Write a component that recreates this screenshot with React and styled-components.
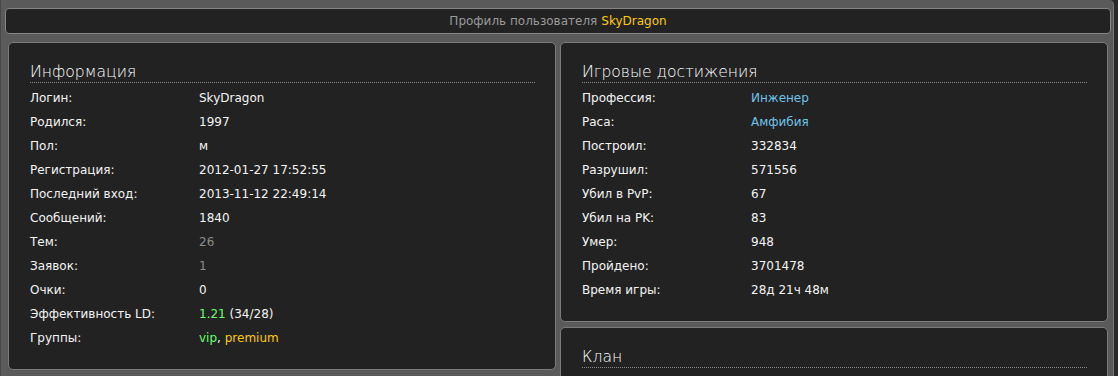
import React from "react";
import styled, { createGlobalStyle } from "styled-components";

const GlobalStyle = createGlobalStyle`
  html, body {
    margin: 0;
    padding: 0;
    background: #2a2a2a;
  }
  body {
    font-family: "DejaVu Sans", Verdana, sans-serif;
    font-size: 12px;
    color: #f4f4f4;
  }
`;

const Frame = styled.div`
  width: 1114px;
  height: 376px;
  box-sizing: border-box;
  background: #5a5a5a;
  border-left: 1px solid #474747;
  border-right: 1px solid #777;
  border-top-right-radius: 5px;
  padding: 8px 2px 0 4px;
  overflow: hidden;
`;

const TitleBar = styled.div`
  height: 26px;
  box-sizing: border-box;
  background: #222;
  border: 1px solid #858585;
  border-radius: 4px;
  display: flex;
  align-items: center;
  justify-content: center;
  color: #9a9a9a;
`;

const UserName = styled.span`
  color: #ffcc00;
  margin-left: 4px;
`;

const Columns = styled.div`
  display: grid;
  grid-template-columns: 548px 548px;
  gap: 4px;
  margin: 8px 4px 0 3px;
  align-items: start;
`;

const Stack = styled.div`
  display: flex;
  flex-direction: column;
  gap: 5px;
`;

const Panel = styled.section`
  background: #222;
  border: 1px solid #7c7c7c;
  border-radius: 5px;
  padding: 20px 20px 19px 21px;
`;

const Heading = styled.h2`
  margin: 0 0 3px;
  font-family: "DejaVu Sans", Verdana, sans-serif;
  font-weight: 200;
  font-size: 15.6px;
  line-height: 19px;
  color: #ffffff;
  border-bottom: 1px dotted #8a8a8a;
`;

const Row = styled.div`
  display: grid;
  grid-template-columns: 169px 1fr;
  height: 24px;
  align-items: center;
`;

const Value = styled.span`
  color: ${(p) => p.$color || "#f4f4f4"};
`;

const Tint = styled.span`
  color: ${(p) => p.$color};
`;

const info = [
  ["Логин:", "SkyDragon"],
  ["Родился:", "1997"],
  ["Пол:", "м"],
  ["Регистрация:", "2012-01-27 17:52:55"],
  ["Последний вход:", "2013-11-12 22:49:14"],
  ["Сообщений:", "1840"],
  ["Тем:", "26", "#8c8c8c"],
  ["Заявок:", "1", "#8c8c8c"],
  ["Очки:", "0"],
];

const achievements = [
  ["Профессия:", "Инженер", "#6ec3e6"],
  ["Раса:", "Амфибия", "#6ec3e6"],
  ["Построил:", "332834"],
  ["Разрушил:", "571556"],
  ["Убил в PvP:", "67"],
  ["Убил на PK:", "83"],
  ["Умер:", "948"],
  ["Пройдено:", "3701478"],
  ["Время игры:", "28д 21ч 48м"],
];

const App = () => {
  return (
    <>
      <GlobalStyle />
      <Frame>
        <TitleBar>
          Профиль пользователя<UserName>SkyDragon</UserName>
        </TitleBar>
        <Columns>
          <Panel>
            <Heading>Информация</Heading>
            {info.map(([label, value, color]) => (
              <Row key={label}>
                <span>{label}</span>
                <Value $color={color}>{value}</Value>
              </Row>
            ))}
            <Row>
              <span>Эффективность LD:</span>
              <Value>
                <Tint $color="#66ff66">1.21</Tint> (34/28)
              </Value>
            </Row>
            <Row>
              <span>Группы:</span>
              <Value>
                <Tint $color="#66ff66">vip</Tint>,{" "}
                <Tint $color="#ffcc00">premium</Tint>
              </Value>
            </Row>
          </Panel>
          <Stack>
            <Panel>
              <Heading>Игровые достижения</Heading>
              {achievements.map(([label, value, color]) => (
                <Row key={label}>
                  <span>{label}</span>
                  <Value $color={color}>{value}</Value>
                </Row>
              ))}
            </Panel>
            <Panel>
              <Heading>Клан</Heading>
            </Panel>
          </Stack>
        </Columns>
      </Frame>
    </>
  );
};

export default App;
